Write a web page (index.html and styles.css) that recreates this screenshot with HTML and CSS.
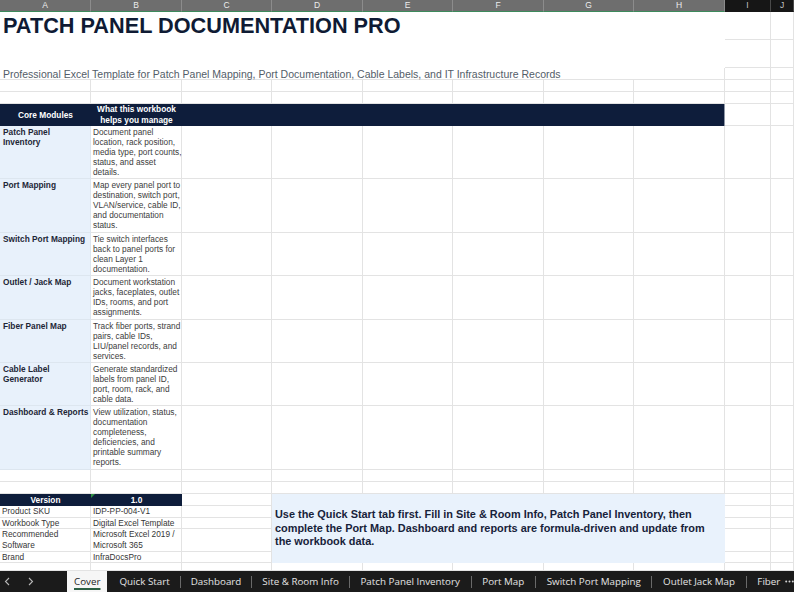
FILE: index.html
```html
<!DOCTYPE html>
<html lang="en">
<head>
    <meta charset="UTF-8">
    <meta name="viewport" content="width=device-width, initial-scale=1.0">
    <title>Patch Panel Documentation Pro - Cover</title>
    <link rel="stylesheet" href="styles.css">
</head>
<body>

<div class="sheet">
    <!-- column headers -->
    <div class="hd">A</div><div class="hd">B</div><div class="hd">C</div><div class="hd">D</div>
    <div class="hd">E</div><div class="hd">F</div><div class="hd">G</div><div class="hd">H</div>
    <div class="hd dark">I</div><div class="hd dark">J</div>

    <!-- rows 1-3: title block -->
    <div class="title">PATCH PANEL DOCUMENTATION PRO</div>
    <div class="c"></div><div class="c"></div>
    <div class="c"></div><div class="c"></div>
    <div class="subtitle">Professional Excel Template for Patch Panel Mapping, Port Documentation, Cable Labels, and IT Infrastructure Records</div>
    <div class="c"></div><div class="c"></div>

    <!-- rows 4-5 -->
    <div class="c"></div><div class="c"></div><div class="c"></div><div class="c"></div><div class="c"></div>
    <div class="c"></div><div class="c"></div><div class="c"></div><div class="c"></div><div class="c"></div>
    <div class="c"></div><div class="c"></div><div class="c"></div><div class="c"></div><div class="c"></div>
    <div class="c"></div><div class="c"></div><div class="c"></div><div class="c"></div><div class="c"></div>

    <!-- row 6: modules header -->
    <div class="th">Core Modules</div>
    <div class="th">What this workbook<br>helps you manage</div>
    <div class="th fill"></div>
    <div class="c"></div><div class="c"></div>

    <!-- rows 7-13: modules -->
    <div class="mod">Patch Panel<br>Inventory</div>
    <div class="desc">Document panel<br>location, rack position,<br>media type, port counts,<br>status, and asset<br>details.</div>
    <div class="c"></div><div class="c"></div><div class="c"></div><div class="c"></div><div class="c"></div><div class="c"></div><div class="c"></div><div class="c"></div>

    <div class="mod">Port Mapping</div>
    <div class="desc">Map every panel port to<br>destination, switch port,<br>VLAN/service, cable ID,<br>and documentation<br>status.</div>
    <div class="c"></div><div class="c"></div><div class="c"></div><div class="c"></div><div class="c"></div><div class="c"></div><div class="c"></div><div class="c"></div>

    <div class="mod">Switch Port Mapping</div>
    <div class="desc">Tie switch interfaces<br>back to panel ports for<br>clean Layer 1<br>documentation.</div>
    <div class="c"></div><div class="c"></div><div class="c"></div><div class="c"></div><div class="c"></div><div class="c"></div><div class="c"></div><div class="c"></div>

    <div class="mod">Outlet / Jack Map</div>
    <div class="desc">Document workstation<br>jacks, faceplates, outlet<br>IDs, rooms, and port<br>assignments.</div>
    <div class="c"></div><div class="c"></div><div class="c"></div><div class="c"></div><div class="c"></div><div class="c"></div><div class="c"></div><div class="c"></div>

    <div class="mod">Fiber Panel Map</div>
    <div class="desc">Track fiber ports, strand<br>pairs, cable IDs,<br>LIU/panel records, and<br>services.</div>
    <div class="c"></div><div class="c"></div><div class="c"></div><div class="c"></div><div class="c"></div><div class="c"></div><div class="c"></div><div class="c"></div>

    <div class="mod">Cable Label<br>Generator</div>
    <div class="desc">Generate standardized<br>labels from panel ID,<br>port, room, rack, and<br>cable data.</div>
    <div class="c"></div><div class="c"></div><div class="c"></div><div class="c"></div><div class="c"></div><div class="c"></div><div class="c"></div><div class="c"></div>

    <div class="mod">Dashboard &amp; Reports</div>
    <div class="desc">View utilization, status,<br>documentation<br>completeness,<br>deficiencies, and<br>printable summary<br>reports.</div>
    <div class="c"></div><div class="c"></div><div class="c"></div><div class="c"></div><div class="c"></div><div class="c"></div><div class="c"></div><div class="c"></div>

    <!-- rows 14-15 -->
    <div class="c"></div><div class="c"></div><div class="c"></div><div class="c"></div><div class="c"></div>
    <div class="c"></div><div class="c"></div><div class="c"></div><div class="c"></div><div class="c"></div>
    <div class="c"></div><div class="c"></div><div class="c"></div><div class="c"></div><div class="c"></div>
    <div class="c"></div><div class="c"></div><div class="c"></div><div class="c"></div><div class="c"></div>

    <!-- rows 16-20: product info + quick start note -->
    <div class="vh">Version</div>
    <div class="vh flag">1.0</div>
    <div class="c"></div>
    <div class="note">
        <p>Use the Quick Start tab first. Fill in Site &amp; Room Info, Patch Panel Inventory, then<br>complete the Port Map. Dashboard and reports are formula-driven and update from<br>the workbook data.</p>
    </div>
    <div class="c"></div><div class="c"></div>

    <div class="kv">Product SKU</div><div class="kv">IDP-PP-004-V1</div>
    <div class="c"></div><div class="c"></div><div class="c"></div>

    <div class="kv">Workbook Type</div><div class="kv">Digital Excel Template</div>
    <div class="c"></div><div class="c"></div><div class="c"></div>

    <div class="kv">Recommended<br>Software</div><div class="kv">Microsoft Excel 2019 /<br>Microsoft 365</div>
    <div class="c"></div><div class="c"></div><div class="c"></div>

    <div class="kv">Brand</div><div class="kv">InfraDocsPro</div>
    <div class="c"></div><div class="c"></div><div class="c"></div>

    <!-- row 21 -->
    <div class="c"></div><div class="c"></div><div class="c"></div><div class="c"></div><div class="c"></div>
    <div class="c"></div><div class="c"></div><div class="c"></div><div class="c"></div><div class="c"></div>
</div>

<div class="tabs">
    <div class="nav">
        <svg width="6" height="9" viewBox="0 0 6 9"><path d="M5 1 L1.5 4.5 L5 8" fill="none" stroke="#b8b8b8" stroke-width="1.1"/></svg>
        <svg width="6" height="9" viewBox="0 0 6 9"><path d="M1 1 L4.5 4.5 L1 8" fill="none" stroke="#b8b8b8" stroke-width="1.1"/></svg>
    </div>
    <div class="tab active"><span>Cover</span></div>
    <div class="tab">Quick Start</div>
    <span class="sep"></span>
    <div class="tab">Dashboard</div>
    <span class="sep"></span>
    <div class="tab">Site &amp; Room Info</div>
    <span class="sep"></span>
    <div class="tab">Patch Panel Inventory</div>
    <span class="sep"></span>
    <div class="tab">Port Map</div>
    <span class="sep"></span>
    <div class="tab">Switch Port Mapping</div>
    <span class="sep"></span>
    <div class="tab">Outlet Jack Map</div>
    <span class="sep"></span>
    <div class="tab">Fiber</div>
    <svg class="more" width="9" height="3" viewBox="0 0 9 3"><circle cx="1.2" cy="1.5" r="1" fill="#d4d4d4"/><circle cx="4.5" cy="1.5" r="1" fill="#d4d4d4"/><circle cx="7.8" cy="1.5" r="1" fill="#d4d4d4"/></svg>
</div>

</body>
</html>
```

FILE: styles.css
```css
* {
    box-sizing: border-box;
}
body {
    margin: 0;
    width: 794px;
    height: 592px;
    overflow: hidden;
    background: #fff;
    font-family: "Liberation Sans", Arial, sans-serif;
}
.sheet {
    display: grid;
    grid-template-columns: 91px 91px 90px 91px 90px 91px 90px 91px 46px 23px;
    grid-template-rows: 12px 28px 28px 12px 12px 12px 22px 53px 54px 43px 44px 43px 43px 64px 12px 12px 12px 12px 11px 23px 11px 8px;
    height: 571px;
    overflow: hidden;
}
.c {
    border-right: 1px solid #e3e3e3;
    border-bottom: 1px solid #e3e3e3;
}

/* column letters */
.hd {
    background: #6e6e6e;
    color: #ededed;
    font-size: 8.5px;
    line-height: 11px;
    text-align: center;
    border-right: 1px solid #8c8c8c;
    border-bottom: 1px solid #3d8a5c;
}
.hd.dark {
    background: #161616;
    color: #c4c4c4;
    border-right-color: #4a4a4a;
    border-bottom-color: #161616;
}

/* title block */
.title {
    grid-column: span 8;
    grid-row: span 2;
    padding-left: 3px;
    font-size: 21.7px;
    font-weight: bold;
    line-height: 28px;
    color: #0f1b34;
    white-space: nowrap;
}
.subtitle {
    grid-column: span 8;
    padding-left: 3px;
    font-size: 10.5px;
    line-height: 13px;
    color: #535d68;
    white-space: nowrap;
    border-right: 1px solid #e3e3e3;
    border-bottom: 1px solid #e3e3e3;
}

/* modules table */
.th {
    display: flex;
    align-items: center;
    justify-content: center;
    text-align: center;
    background: #0e1d3b;
    color: #fff;
    font-size: 8.3px;
    font-weight: bold;
    line-height: 11px;
}
.th.fill {
    grid-column: span 6;
    border-right: 1px solid #8e97a6;
}
.mod {
    padding: 1px 3px;
    background: #e8f1fb;
    color: #1d2636;
    font-size: 8.3px;
    font-weight: bold;
    line-height: 10px;
    white-space: nowrap;
    border-right: 1px solid #dde6ef;
    border-bottom: 1px solid #dde6ef;
}
.desc {
    padding: 1px 2px;
    color: #3c3c3c;
    font-size: 8.3px;
    line-height: 10px;
    white-space: nowrap;
    border-right: 1px solid #e3e3e3;
    border-bottom: 1px solid #e3e3e3;
}

/* product info */
.vh {
    background: #0e1d3b;
    color: #fff;
    font-size: 8.3px;
    font-weight: bold;
    line-height: 12px;
    text-align: center;
}
.vh.flag {
    position: relative;
}
.vh.flag::before {
    content: "";
    position: absolute;
    left: 0;
    top: 0;
    border-top: 4px solid #2f8f45;
    border-right: 4px solid transparent;
}
.kv {
    padding: 0 2px;
    color: #363636;
    font-size: 8.3px;
    line-height: 11px;
    white-space: nowrap;
    border-right: 1px solid #e3e3e3;
    border-bottom: 1px solid #e3e3e3;
}
.note {
    grid-column: span 5;
    grid-row: span 5;
    display: flex;
    align-items: center;
    padding: 0 3px;
    background: #e9f2fc;
}
.note p {
    margin: 0;
    color: #17223a;
    font-size: 10.9px;
    font-weight: bold;
    line-height: 13.5px;
    white-space: nowrap;
}

/* sheet tabs */
.tabs {
    display: flex;
    align-items: center;
    height: 21px;
    background: #1b1b1b;
    font-family: "Open Sans", sans-serif;
    font-size: 9.8px;
    color: #e4e4e4;
    white-space: nowrap;
    overflow: hidden;
}
.nav {
    display: flex;
    align-items: center;
    gap: 18px;
    width: 67px;
    padding-left: 4px;
}
.nav svg {
    display: block;
}
.tab {
    padding: 0 10px;
}
.tab:nth-child(n+8) {
    padding: 0 10.7px;
}
.tab.active {
    align-self: stretch;
    display: flex;
    align-items: center;
    padding: 0 7px;
    margin-right: 2px;
    background: #f6f6f6;
    color: #1f1f1f;
}
.tab.active span {
    text-decoration: underline;
    text-decoration-thickness: 2px;
    text-underline-offset: 3px;
    text-decoration-color: #2c5f43;
}
.sep {
    width: 1px;
    height: 12px;
    background: #6a6a6a;
}
.more {
    display: block;
    flex: none;
    margin-left: -6px;
}
```
